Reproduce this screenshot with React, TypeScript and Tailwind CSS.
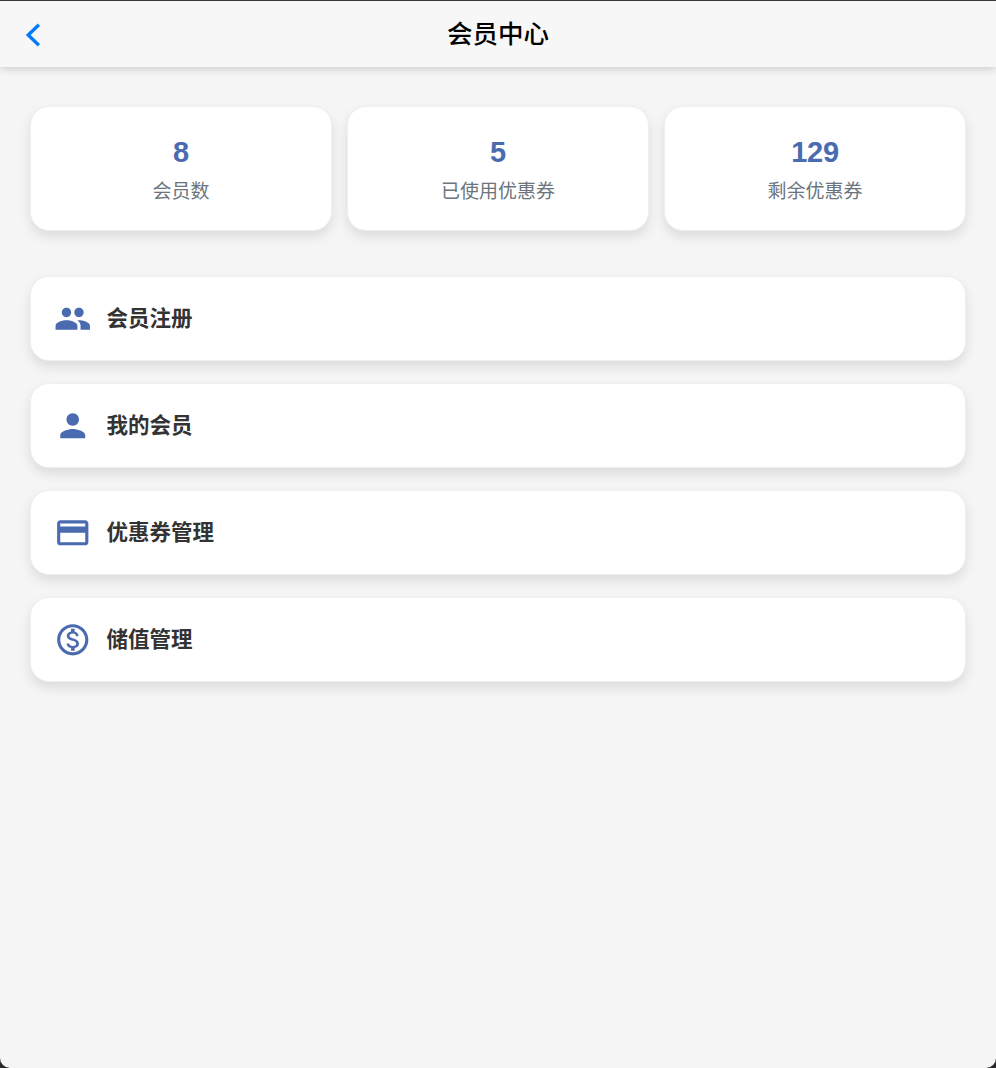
import React from "react";
import type { IconType } from "react-icons";
import {
  MdPeople,
  MdPerson,
  MdOutlineCreditCard,
  MdOutlineMonetizationOn,
} from "react-icons/md";

const stats = [
  { value: 8, label: "会员数" },
  { value: 5, label: "已使用优惠券" },
  { value: 129, label: "剩余优惠券" },
];

const menu: { icon: IconType; label: string }[] = [
  { icon: MdPeople, label: "会员注册" },
  { icon: MdPerson, label: "我的会员" },
  { icon: MdOutlineCreditCard, label: "优惠券管理" },
  { icon: MdOutlineMonetizationOn, label: "储值管理" },
];

const card =
  "rounded-[19px] border border-[#efefef] bg-white shadow-[0_6px_12px_rgba(0,0,0,0.1)]";

function Header() {
  return (
    <header className="grid h-[67px] grid-cols-[1fr_auto_1fr] items-center border-t border-[#39363a] bg-[#f7f7f7] shadow-[0_1px_9px_rgba(0,0,0,0.2)]">
      <button type="button" aria-label="返回" className="ml-[25px] mt-px w-fit">
        <svg width="16" height="24" viewBox="0 0 16 24" fill="none" stroke="#007aff" strokeWidth="3.3">
          <path d="M13.9 1.8 3.2 12l10.7 10.2" />
        </svg>
      </button>
      <h1 className="text-[25.5px] leading-[36px] font-medium text-black">会员中心</h1>
    </header>
  );
}

export default function App() {
  return (
    <div className="bg-[#2b282b] font-['Liberation_Sans','Noto_Sans_CJK_SC',sans-serif]">
      <div className="min-h-screen overflow-hidden rounded-b-[10px] bg-[#f5f5f5]">
        <Header />
        <main className="px-[30px] pt-[39px]">
          <section className="grid grid-cols-3 gap-[15px]">
            {stats.map((s) => (
              <div key={s.label} className={`${card} flex h-[125px] flex-col items-center pt-[28px]`}>
                <span className="text-[29px] leading-[34px] font-bold tracking-[-0.3px] text-[#4a6baf]">{s.value}</span>
                <span className="mt-[9px] text-[19px] leading-[28px] text-[#6c757d]">{s.label}</span>
              </div>
            ))}
          </section>
          <nav className="mt-[45px] flex flex-col gap-[22px]">
            {menu.map(({ icon: Icon, label }) => (
              <button
                type="button"
                key={label}
                className={`${card} flex h-[85px] items-center gap-[14.9px] px-[23px]`}
              >
                <Icon className="size-[37.5px] text-[#4a6baf]" />
                <span className="text-[21.5px] leading-[32px] font-bold text-[#333]">{label}</span>
              </button>
            ))}
          </nav>
        </main>
      </div>
    </div>
  );
}
